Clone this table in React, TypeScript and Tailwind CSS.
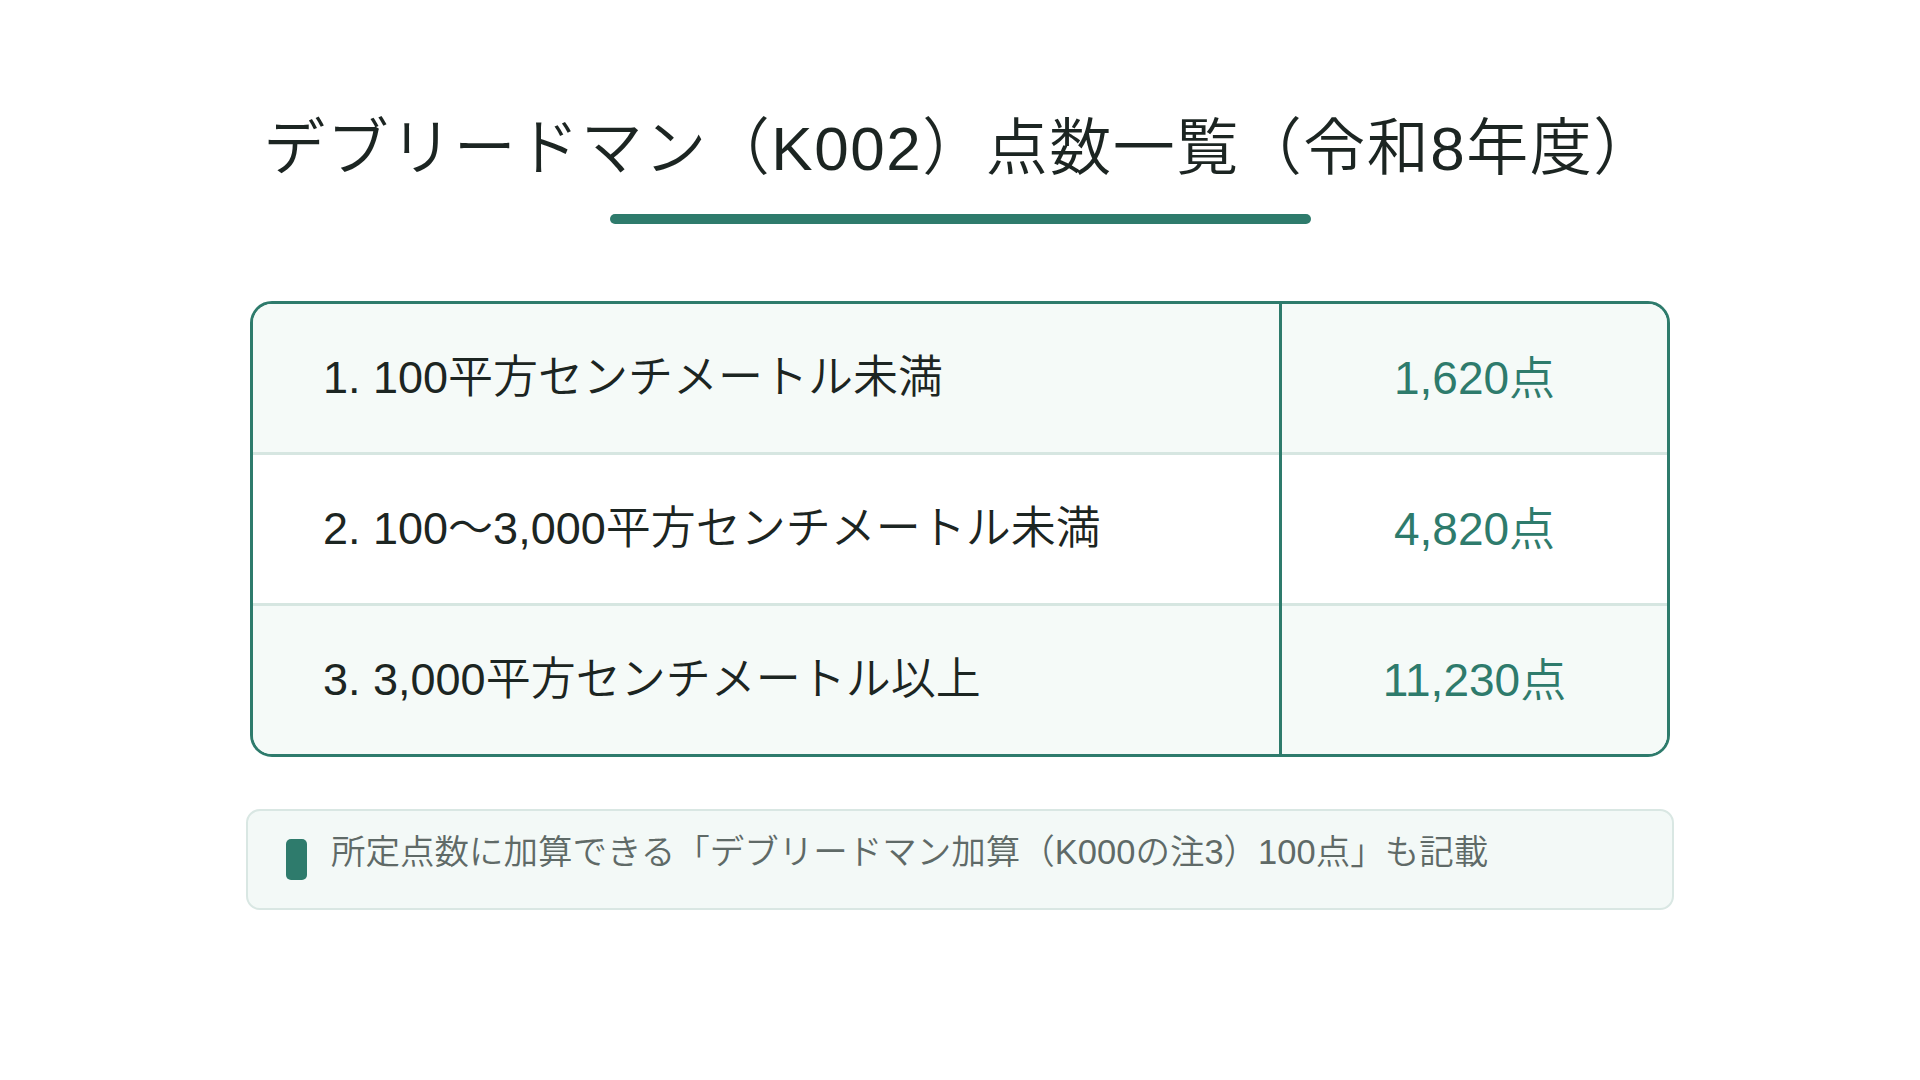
import React from 'react';

const rows = [
  { label: '1. 100平方センチメートル未満', points: '1,620点', shade: true },
  { label: '2. 100〜3,000平方センチメートル未満', points: '4,820点', shade: false },
  { label: '3. 3,000平方センチメートル以上', points: '11,230点', shade: true },
];

function App() {
  return (
    <div
      className="min-h-screen w-full bg-white flex flex-col items-center pt-[113px]"
      style={{ fontFamily: '"Liberation Sans", "Noto Sans CJK JP", sans-serif' }}
    >
      <h1 className="text-[62px] leading-[72px] font-[350] tracking-[1.5px] text-[#1c2522]">
        デブリードマン（K002）点数一覧（令和8年度）
      </h1>
      <div className="mt-[29px] h-[10px] w-[701px] rounded-full bg-[#2e7b6c]" />

      <div className="mt-[77px] w-[1420px] rounded-[22px] border-[3px] border-[#2e7b6c] overflow-hidden">
        {rows.map((r, i) => (
          <div key={i}>
            {i > 0 && (
              <div className="grid grid-cols-[1026px_3px_1fr] h-[3px]">
                <div className="bg-[#d6e6e1]" />
                <div className="bg-[#2e7b6c]" />
                <div className="bg-[#d6e6e1]" />
              </div>
            )}
            <div className={`grid grid-cols-[1026px_3px_1fr] h-[148px] ${r.shade ? 'bg-[#f5faf8]' : 'bg-white'}`}>
              <div className="flex items-center pl-[70px] text-[45px] font-[350] text-[#1c2522]">{r.label}</div>
              <div className="bg-[#2e7b6c]" />
              <div className="flex items-center justify-center text-[46px] font-[350] text-[#2e7b6c]">{r.points}</div>
            </div>
          </div>
        ))}
      </div>

      <div className="mt-[52px] w-[1428px] h-[101px] rounded-[14px] border-2 border-[#d9e7e3] bg-[#f3f9f7] flex items-center pl-[38px] gap-[24px]">
        <div className="w-[21px] h-[41px] rounded-[5px] bg-[#2e7b6c]" />
        <p className="text-[34.5px] font-[350] text-[#5f6a67] -mt-[14px]">
          所定点数に加算できる「デブリードマン加算（K000の注3）100点」も記載
        </p>
      </div>
    </div>
  );
}

export default App;
